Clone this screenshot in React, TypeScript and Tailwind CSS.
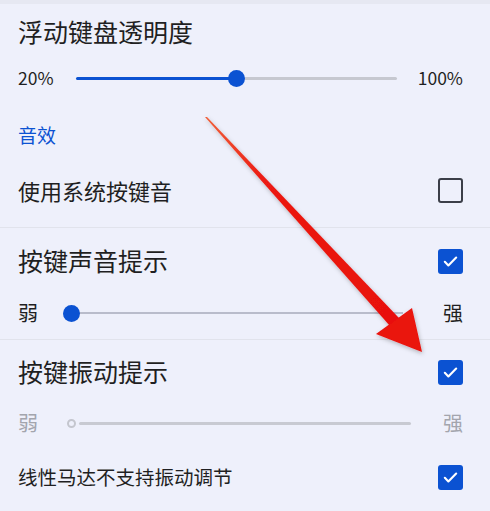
import React from "react";

const font = { fontFamily: '"Noto Sans CJK SC", "Noto Sans", sans-serif' };

function Checkbox({ checked }: { checked: boolean }) {
  if (!checked) {
    return <div className="w-[25px] h-[25px] rounded-[3px] border-[2.5px] border-[#3b3e48]" />;
  }
  return (
    <div className="w-[25px] h-[25px] rounded-[3px] bg-[#0b52d2] flex items-center justify-center">
      <svg width="17" height="17" viewBox="0 0 24 24" fill="none">
        <path d="M4 12.5l5 5L20 6.5" stroke="white" strokeWidth="3" strokeLinecap="round" strokeLinejoin="round" />
      </svg>
    </div>
  );
}

function Arrow() {
  return (
    <svg className="absolute inset-0 pointer-events-none" width="490" height="511" viewBox="0 0 490 511">
      <defs>
        <filter id="sh" x="-20%" y="-20%" width="140%" height="140%">
          <feDropShadow dx="1" dy="2" stdDeviation="2" floodColor="#000" floodOpacity="0.25" />
        </filter>
        <linearGradient id="rg" x1="0" y1="0" x2="1" y2="1">
          <stop offset="0" stopColor="#f0603a" />
          <stop offset="0.3" stopColor="#ec1a12" />
          <stop offset="1" stopColor="#e8100c" />
        </linearGradient>
      </defs>
      <g filter="url(#sh)">
        <polygon points="205,117 207,117 399,318 390,326" fill="url(#rg)" />
        <polygon points="376,334 412,308 422,352" fill="#ea120d" />
      </g>
    </svg>
  );
}

export default function App() {
  return (
    <div className="relative w-[490px] h-[511px] overflow-hidden bg-[#eef0fb] text-[#1f1f22]" style={font}>
      <div className="h-[4px] bg-[#e6e8f2]" />

      <div className="pl-[18px] pr-[27px]">
        <div className="h-[56px] flex items-center text-[25px]">浮动键盘透明度</div>

        <div className="h-[36px] flex items-center text-[17.5px]">
          <span className="w-[58px]">20%</span>
          <div className="flex-1 relative h-[16px] flex items-center">
            <div className="h-[3px] w-[160px] bg-[#0b52d2] rounded-l-full" />
            <div className="h-[3px] flex-1 bg-[#c6c8d0] rounded-r-full" />
            <div className="absolute left-[152px] w-[17px] h-[17px] rounded-full bg-[#0b52d2]" />
          </div>
          <span className="w-[66px] text-right">100%</span>
        </div>

        <div className="h-[57px] pt-[26px] text-[19px] text-[#0b52d2] leading-[26px]">音效</div>

        <div className="h-[74px] flex items-center justify-between">
          <span className="text-[22px]">使用系统按键音</span>
          <Checkbox checked={false} />
        </div>
      </div>
      <div className="h-px bg-[#e1e3ec]" />

      <div className="pl-[18px] pr-[27px]">
        <div className="h-[66px] flex items-center justify-between">
          <span className="text-[25px]">按键声音提示</span>
          <Checkbox checked />
        </div>
        <div className="h-[38px] flex items-center text-[20px]">
          <span className="w-[45px]">弱</span>
          <div className="flex-1 relative h-[16px] flex items-center">
            <div className="h-[2px] flex-1 bg-[#b9bccb] mx-[8px]" />
            <div className="absolute left-0 w-[17px] h-[17px] rounded-full bg-[#0b52d2]" />
          </div>
          <span className="w-[52px] text-right">强</span>
        </div>
        <div className="h-[7px]" />
      </div>
      <div className="h-px bg-[#e1e3ec]" />

      <div className="pl-[18px] pr-[27px]">
        <div className="h-[64px] flex items-center justify-between">
          <span className="text-[25px]">按键振动提示</span>
          <Checkbox checked />
        </div>
        <div className="h-[38px] flex items-center text-[20px] text-[#a3a5ad]">
          <span className="w-[49px]">弱</span>
          <div className="flex-1 flex items-center gap-[3px]">
            <div className="w-[9px] h-[9px] rounded-full border-[2px] border-[#c4c6ce]" />
            <div className="h-[3px] flex-1 bg-[#c8cad2] rounded-full" />
          </div>
          <span className="w-[52px] text-right">强</span>
        </div>
        <div className="h-[70px] flex items-center justify-between">
          <span className="text-[19.5px]">线性马达不支持振动调节</span>
          <Checkbox checked />
        </div>
      </div>

      <Arrow />
    </div>
  );
}
